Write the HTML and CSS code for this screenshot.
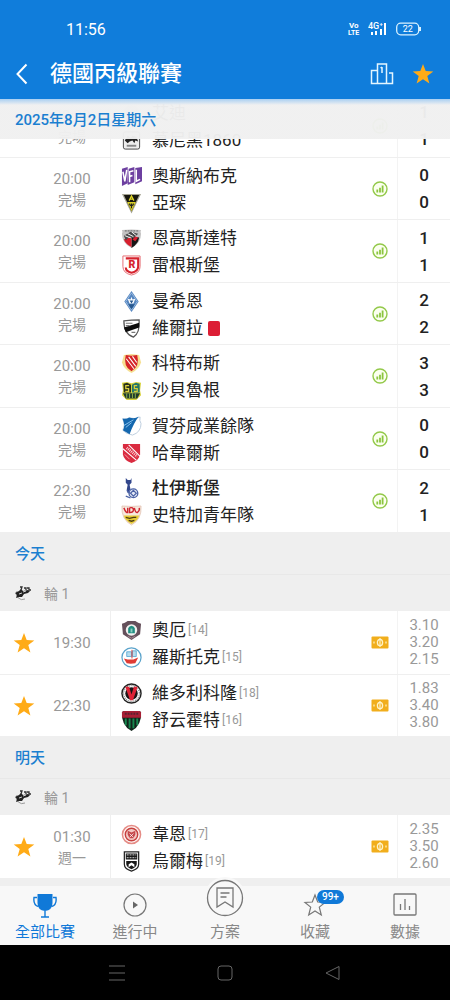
FILE: index.html
```html
<!DOCTYPE html>
<html lang="zh-Hant">
<head>
    <meta charset="UTF-8">
    <meta name="viewport" content="width=device-width, initial-scale=1.0">
    <title>德國丙級聯賽</title>
    <link rel="stylesheet" href="styles.css">
</head>
<body>
    <!-- shared icons -->
    <svg class="sprite" aria-hidden="true">
        <symbol id="star" viewBox="0 0 22 22"><path d="M11 1l2.700 7.100 7.600.3-6 4.700 2.100 7.400L11 16.200l-6.400 4.300 2.100-7.400-6-4.700 7.600-.3z"/></symbol>
        <symbol id="stats" viewBox="0 0 16 16"><circle cx="8" cy="8" r="7" fill="#fbffef" stroke="#93c94a" stroke-width="1.400"/><path d="M5.300 11.400V8.600M8 11.400V6.800M10.600 11.400V4.600" stroke="#8bc53f" stroke-width="1.800"/></symbol>
        <symbol id="ticket" viewBox="0 0 18 13"><rect x=".5" y=".5" width="17" height="12" rx="1" fill="#f1ae1c"/><ellipse cx="9" cy="6.500" rx="2.600" ry="3.200" fill="none" stroke="#fff3c8" stroke-width="1.300"/><path d="M9 2v9M3 5.500v2M15 5.500v2" stroke="#fff3c8" stroke-width="1.200"/></symbol>
        <symbol id="liga" viewBox="0 0 18 16"><path d="M3 6a6 6 0 0 0 8 8" fill="none" stroke="#999" stroke-width="1"/><path d="M1 8l4-2 2-2 2 2 5-1 2 1-2 2-4 1-2 3-3 0-3 1 1-3z" fill="#222"/><path d="M6 2l2 0-1 3M10 3h2v2M13 3h2v2h2" fill="none" stroke="#333" stroke-width="1.300"/><path d="M5 9l3-1M9 7l3-1" stroke="#fff" stroke-width=".8"/></symbol>
    </svg>

    <div class="app">
        <header class="header">
            <div class="status-bar">
                <span class="clock">11:56</span>
                <div class="status-icons">
                    <svg width="12" height="14" viewBox="0 0 12 14" fill="#fff"><text x="1" y="6" font-size="8" font-weight="700">Vo</text><text x="0" y="13" font-size="7" font-weight="700">LTE</text></svg>
                    <svg width="20" height="14" viewBox="0 0 20 14" fill="#fff"><text x="0" y="7" font-size="9" font-weight="500">4G⁺</text><path d="M3 10h2v3H3zM7 9h2v4H7zM12 7h2v6h-2zM16 1h2v12h-2z"/></svg>
                    <svg width="26" height="14" viewBox="0 0 26 14"><rect x=".7" y="1.200" width="22" height="11.600" rx="4" fill="none" stroke="#d9f2ff" stroke-width="1.300"/><path d="M24 5v4" stroke="#d9f2ff" stroke-width="2"/><text x="11.700" y="10" text-anchor="middle" font-size="9" fill="#fff">22</text></svg>
                </div>
            </div>
            <div class="title-bar">
                <button type="button" class="icon-btn back" aria-label="返回">
                    <svg width="14" height="22" viewBox="0 0 14 22"><path d="M10.500 1.500L1.500 11l9 9.500" fill="none" stroke="#fff" stroke-width="2"/></svg>
                </button>
                <h1>德國丙級聯賽</h1>
                <button type="button" class="icon-btn" aria-label="積分榜">
                    <svg width="24" height="22" viewBox="0 0 24 22" fill="none" stroke="#e4f6ff" stroke-width="1.500"><path d="M7.500 20.500V1h9v19.500M7.500 7.500H3.300M5 7.500H1.500v13h21V10H19M12 4v6M12 4l-1.500 1"/></svg>
                </button>
                <button type="button" class="icon-btn fav" aria-label="收藏">
                    <svg width="22" height="22"><use href="#star"/></svg>
                </button>
            </div>
        </header>

        <main class="list">
            <h2 class="day sticky">2025年8月2日星期六</h2>
            <ul class="matches first">
                <li class="match">
                    <div class="time"><span>20:00</span><span>完場</span></div>
                    <div class="teams">
                        <div class="team"><svg class="badge" viewBox="0 0 22 22"><circle cx="11" cy="11" r="9" fill="#ddd"/></svg>艾迪</div>
                        <div class="team"><svg class="badge" viewBox="0 0 22 22"><rect x="2.500" y="2" width="17" height="18" rx="2" fill="#eee" stroke="#444"/><path d="M4 11l3-5 3 2 2-2 4 1 2 5-3-1-1 3-2-3-3 1-2 2z" fill="#222"/><path d="M6 16.500h10" stroke="#888" stroke-width="2"/></svg>慕尼黑1860</div>
                    </div>
                    <div class="extra"><svg width="16" height="16"><use href="#stats"/></svg></div>
                    <div class="score"><span>1</span><span>1</span></div>
                </li>
                <li class="match">
                    <div class="time"><span>20:00</span><span>完場</span></div>
                    <div class="teams">
                        <div class="team"><svg class="badge" viewBox="0 0 22 22"><path d="M1 3l6-2v17l-6 3zM8 3l6-2v16l-7 3zM15 2l7-1v15l-7 3z" fill="#6d3fa0"/><path d="M2 6l2 10L6 4M9 17V6l4-1M9 11l3-1M16 4v12l4-2" fill="none" stroke="#fff" stroke-width="1.600"/></svg>奧斯納布克</div>
                        <div class="team"><svg class="badge" viewBox="0 0 22 22"><path d="M1 1h20L11 21.500z" fill="#a7a594"/><path d="M3 2h16l-8 17z" fill="#17170f"/><path d="M6.500 9.500L11 19l4.500-9.500z" fill="#d9cf27"/><path d="M8.500 8L11 3l2.500 5M9.500 6.500h3" fill="none" stroke="#e4d92a" stroke-width="1.300"/><path d="M9 11c0 3 4 3 4 0M11 11v5" fill="none" stroke="#222" stroke-width="1.200"/></svg>亞琛</div>
                    </div>
                    <div class="extra"><svg width="16" height="16"><use href="#stats"/></svg></div>
                    <div class="score"><span>0</span><span>0</span></div>
                </li>
                <li class="match">
                    <div class="time"><span>20:00</span><span>完場</span></div>
                    <div class="teams">
                        <div class="team"><svg class="badge" viewBox="0 0 22 22"><path d="M1 2q10-1 20 0-1 2 0 4 0 10-10 15Q1 16 1 6q1-2 0-4z" fill="#c4c3c3"/><path d="M11 9l8 1q-1 7-8 11z" fill="#161616"/><path d="M3 12q4-3 8-1v9q-6-3-8-8z" fill="#d81f2e"/><path d="M3 8l7-4 8 2-5 5-4-2-4 4z" fill="#4a4a4a"/><path d="M4 8l5 2M7 6l6 3M11 4l5 4" stroke="#fff" stroke-width="1"/><path d="M12 12l3-3 3 1-3 4z" fill="#d81f2e"/><path d="M4 3h14" stroke="#777" stroke-width="1.500" stroke-dasharray="2 1"/></svg>恩高斯達特</div>
                        <div class="team"><svg class="badge" viewBox="0 0 22 22"><path d="M2 1h18v11q0 7-9 9-9-2-9-9z" fill="#fff" stroke="#e56a70"/><path d="M5 3.500h13V12q0 5-7 6.500Q5 17 5 13" fill="none" stroke="#d6232e" stroke-width="2.200"/><text x="11.500" y="14" text-anchor="middle" font-size="11" font-weight="900" fill="#d6232e">R</text></svg>雷根斯堡</div>
                    </div>
                    <div class="extra"><svg width="16" height="16"><use href="#stats"/></svg></div>
                    <div class="score"><span>1</span><span>1</span></div>
                </li>
                <li class="match">
                    <div class="time"><span>20:00</span><span>完場</span></div>
                    <div class="teams">
                        <div class="team"><svg class="badge" viewBox="0 0 22 22"><path d="M11 0l7.500 11L11 22 3.500 11z" fill="#5585bf"/><path d="M11 2l6 9-6 9-6-9z" fill="none" stroke="#a9c8e8" stroke-width=".8"/><path d="M7 8l3 1 1-3 1 3 3-1-2 5h-4z" fill="#fff"/><path d="M9 10h4l-2 3zM7.500 14h7L11 19z" fill="#27588f"/></svg>曼希恩</div>
                        <div class="team"><svg class="badge" viewBox="0 0 22 22"><path d="M3 3q8-1 16-1 1 14-6 18Q3 17 3 3z" fill="#fff" stroke="#555" stroke-width="1.300"/><path d="M3 10L19 5v5L5 15z" fill="#0c0c0c"/><path d="M5 5.500h7M5 8h4M11 15h4" stroke="#777" stroke-width="1.200"/></svg>維爾拉<span class="red-card"></span></div>
                    </div>
                    <div class="extra"><svg width="16" height="16"><use href="#stats"/></svg></div>
                    <div class="score"><span>2</span><span>2</span></div>
                </li>
                <li class="match">
                    <div class="time"><span>20:00</span><span>完場</span></div>
                    <div class="teams">
                        <div class="team"><svg class="badge" viewBox="0 0 22 22"><path d="M3 2l8-1 8 1 2 8q-2 7-10 11Q3 17 1 10z" fill="#f6df91"/><path d="M5 2l6 1 6-1q3 12-6 17Q2 14 5 2z" fill="#d52327"/><path d="M5.500 6l8 10.500M8 4l7.500 10M12 3.500L16.500 10" stroke="#fff" stroke-width="1.100"/></svg>科特布斯</div>
                        <div class="team"><svg class="badge" viewBox="0 0 22 22"><path d="M1 3l5-1 5 1.500L16 2l5 1-1 8 1 5-5 5H6l-5-5 1-5z" fill="#d9d33c"/><path d="M2.500 4l4-1 4 2v8H3z" fill="#26301c"/><path d="M11.500 5l4-2 4 1v9h-8z" fill="#23756a"/><path d="M2 14h18l-3 5.500H5z" fill="#203a2b"/><path d="M8.500 6H5v3h3v3H4.500M17 6h-3v3h3v3h-3.500" fill="none" stroke="#d9cf3d" stroke-width="1.300"/><path d="M6 14v5M9 14v5M12 14v5M15 14v5" stroke="#8ab548"/></svg>沙貝魯根</div>
                    </div>
                    <div class="extra"><svg width="16" height="16"><use href="#stats"/></svg></div>
                    <div class="score"><span>3</span><span>3</span></div>
                </li>
                <li class="match">
                    <div class="time"><span>20:00</span><span>完場</span></div>
                    <div class="teams">
                        <div class="team"><svg class="badge" viewBox="0 0 22 22"><path d="M2 3q4 1 7-1 6 2 11-1-1 4 1 7 0 9-9 12Q4 18 2 15q3-5 0-12z" fill="#fff" stroke="#bccddd"/><path d="M1.500 2.500q4 1 7-1 6 2 10-1Q13 8 9 19l-7-4q3-5-.5-12.500z" fill="#1467ae"/><path d="M3 10l10-6M5 12l6-5" stroke="#8cc4ee"/></svg>賀芬咸業餘隊</div>
                        <div class="team"><svg class="badge" viewBox="0 0 22 22"><path d="M2 1h18v11q-1 6-9 9-8-3-9-9z" fill="#da2b40"/><path d="M2 6l14 12M8 2l12 12" stroke="#fff" stroke-width="1.100"/><path d="M6 5l11 9" stroke="#ffd8dc" stroke-width="3" stroke-dasharray="1 1"/><path d="M4 12l5 5" stroke="#f0a0a8"/></svg>哈韋爾斯</div>
                    </div>
                    <div class="extra"><svg width="16" height="16"><use href="#stats"/></svg></div>
                    <div class="score"><span>0</span><span>0</span></div>
                </li>
                <li class="match">
                    <div class="time"><span>22:30</span><span>完場</span></div>
                    <div class="teams">
                        <div class="team winner"><svg class="badge" viewBox="0 0 22 22"><path d="M5 0l2 2h3l1-2 0 5-2 2 1 5-3 4-1-4 1-5-2-2z" fill="#33478c"/><circle cx="13" cy="16" r="4.600" fill="#e5eaf6" stroke="#4b62a5" stroke-width="1.400"/><path d="M10 16l3-3 3 3-3 3zM5 19l5 2M6 13l3 3" fill="none" stroke="#4b62a5" stroke-width="1.300"/></svg>杜伊斯堡</div>
                        <div class="team"><svg class="badge" viewBox="0 0 22 22"><path d="M1 1q10 1 20 0 1 14-10 20Q0 15 1 1z" fill="#f7e9de" stroke="#d8b09c" stroke-width=".6"/><path d="M3 11h16q-1 5-8 9-7-4-8-9z" fill="#e6cb35"/><path d="M3 3q2 5 4 5V3M9 3v5q4 0 4-3T9 3M14 3q1 5 3 5 3-2 2-5" fill="none" stroke="#cf2530" stroke-width="1.500"/><path d="M5 13l4 1 4-1 3 0M8 16l3 1 3-1" stroke="#4c3d14" stroke-width="1.400" fill="none"/></svg>史特加青年隊</div>
                    </div>
                    <div class="extra"><svg width="16" height="16"><use href="#stats"/></svg></div>
                    <div class="score"><span>2</span><span>1</span></div>
                </li>
            </ul>

            <h2 class="day">今天</h2>
            <div class="round"><svg width="18" height="16"><use href="#liga"/></svg>輪 1</div>
            <ul class="matches">
                <li class="match">
                    <button type="button" class="icon-btn fav" aria-label="收藏"><svg width="22" height="22"><use href="#star"/></svg></button>
                    <div class="time"><span>19:30</span></div>
                    <div class="teams">
                        <div class="team"><svg class="badge" viewBox="0 0 22 22"><path d="M1 4l3-1 3-2h8l3 2 3 1-1 11-9 6-9-6z" fill="#65505b"/><circle cx="11" cy="10.500" r="6" fill="#f1f0ef"/><path d="M7.500 14V9l1-2L11 6l2.500 1 1 2v5z" fill="#218f82"/><path d="M10 9h2v4h-2z" fill="#8cccc2"/><path d="M7 17l4 2 4-2" stroke="#a98a96" fill="none"/></svg>奧厄<span class="rank">[14]</span></div>
                        <div class="team"><svg class="badge" viewBox="0 0 22 22"><circle cx="11" cy="11" r="10" fill="#fff" stroke="#5aa3cb" stroke-width="1.300"/><path d="M3 12l4 1h6l5-2-3 6q-5 1-9 0z" fill="#df3b35"/><path d="M6 5h5v5H6zM12 4h4v6h-4z" fill="#b6dced" stroke="#4a9fd0" stroke-width=".8"/><path d="M11.500 3v9" stroke="#df3b35"/></svg>羅斯托克<span class="rank">[15]</span></div>
                    </div>
                    <div class="extra"><svg width="18" height="13"><use href="#ticket"/></svg></div>
                    <div class="odds"><span>3.10</span><span>3.20</span><span>2.15</span></div>
                </li>
                <li class="match">
                    <button type="button" class="icon-btn fav" aria-label="收藏"><svg width="22" height="22"><use href="#star"/></svg></button>
                    <div class="time"><span>22:30</span></div>
                    <div class="teams">
                        <div class="team"><svg class="badge" viewBox="0 0 22 22"><circle cx="11" cy="11" r="10" fill="#fff" stroke="#222" stroke-width="1.500"/><circle cx="11" cy="11" r="8.300" fill="none" stroke="#777" stroke-width="1.300" stroke-dasharray="1 1"/><circle cx="11" cy="11" r="6.500" fill="#1b1416"/><path d="M4.500 4h4l2.500 8 2.500-8h4l-5 14h-3z" fill="#df2437"/></svg>維多利科隆<span class="rank">[18]</span></div>
                        <div class="team"><svg class="badge" viewBox="0 0 22 22"><path d="M1 2l2-1h16l2 1q1 14-10 20Q0 16 1 2z" fill="#12241b"/><path d="M1 2l2-1h16l2 1v6H1z" fill="#a81f35"/><path d="M5 9v7M9 9v10M13 9v10M17 9v7" stroke="#16864d" stroke-width="2"/><path d="M4 4h14" stroke="#5b2230" stroke-width="2" stroke-dasharray="2 1"/></svg>舒云霍特<span class="rank">[16]</span></div>
                    </div>
                    <div class="extra"><svg width="18" height="13"><use href="#ticket"/></svg></div>
                    <div class="odds"><span>1.83</span><span>3.40</span><span>3.80</span></div>
                </li>
            </ul>

            <h2 class="day">明天</h2>
            <div class="round"><svg width="18" height="16"><use href="#liga"/></svg>輪 1</div>
            <ul class="matches">
                <li class="match">
                    <button type="button" class="icon-btn fav" aria-label="收藏"><svg width="22" height="22"><use href="#star"/></svg></button>
                    <div class="time"><span>01:30</span><span>週一</span></div>
                    <div class="teams">
                        <div class="team"><svg class="badge" viewBox="0 0 22 22"><circle cx="11" cy="11" r="9.500" fill="#fff7f5" stroke="#e58c86" stroke-width="1.600"/><circle cx="11" cy="11" r="6.500" fill="#f3c9c4" stroke="#c6403f" stroke-width="1.500"/><path d="M7 7l4 2 4-2v4l-2 4H9l-2-4z" fill="#c4474a"/><path d="M9 10l4 4M13 10l-4 4" stroke="#fff" stroke-width=".8"/></svg>韋恩<span class="rank">[17]</span></div>
                        <div class="team"><svg class="badge" viewBox="0 0 22 22"><path d="M3.500 1h15v13q0 5-7.500 7-7.500-2-7.500-7z" fill="#fff" stroke="#222" stroke-width="1.300"/><path d="M5 2.500h12V9H5zM5.500 10.500h11V14q-1 4-5.500 5-4.500-1-5.500-5z" fill="#191919"/><path d="M6 4h10M6 7h10" stroke="#aaa" stroke-width="1.200" stroke-dasharray="2 1"/><path d="M8 17v-3l3-2 3 2v3l-3-2z" fill="#fff"/></svg>烏爾梅<span class="rank">[19]</span></div>
                    </div>
                    <div class="extra"><svg width="18" height="13"><use href="#ticket"/></svg></div>
                    <div class="odds"><span>2.35</span><span>3.50</span><span>2.60</span></div>
                </li>
            </ul>
        </main>

        <nav class="tabs">
            <a href="#all" class="tab active">
                <svg width="24" height="26" viewBox="0 0 24 26"><path d="M4.500 1h15v9q0 7-7.500 8-7.500-1-7.500-8z" fill="#1079d8"/><path d="M4 4.500H1Q0 12 5.500 13.500M20 4.500h3q1 7.500-4.500 9M12 18v6M8 24h8" fill="none" stroke="#1079d8" stroke-width="1.400"/></svg>
                <span>全部比賽</span>
            </a>
            <a href="#live" class="tab">
                <svg width="24" height="26" viewBox="0 0 24 26"><circle cx="12" cy="12" r="11" fill="none" stroke="#777" stroke-width="1.200"/><path d="M10 8.500l5 3.500-5 3.500z" fill="#666"/></svg>
                <span>進行中</span>
            </a>
            <a href="#plans" class="tab main-tab">
                <svg width="42" height="42" viewBox="0 0 42 42"><circle cx="21" cy="21" r="21" fill="#f8f8f8"/><circle cx="21" cy="21" r="17.500" fill="none" stroke="#777" stroke-width="1.300"/><path d="M13 11h16v19l-8-5-8 5zM16.500 16h9M16.500 20h6" fill="none" stroke="#777" stroke-width="1.300"/></svg>
                <span>方案</span>
            </a>
            <a href="#favourites" class="tab">
                <svg width="24" height="26" viewBox="0 0 24 26"><path d="M12 2l2.700 7 7.300.4-5.700 4.700 2 7.900L12 18l-6.300 4 2-7.900L2 9.400 9.300 9z" fill="none" stroke="#777" stroke-width="1.200"/></svg>
                <span>收藏</span>
                <b class="count">99+</b>
            </a>
            <a href="#data" class="tab">
                <svg width="24" height="26" viewBox="0 0 24 26" fill="none" stroke="#777" stroke-width="1.300"><rect x="1" y="1" width="22" height="21" rx="1"/><path d="M7.500 11v6M12 6v11M16.500 13v4"/></svg>
                <span>數據</span>
            </a>
        </nav>

        <div class="system-nav">
            <button type="button" class="icon-btn" aria-label="選單"><svg width="18" height="18" viewBox="0 0 18 18"><path d="M1 2h16M1 9h16M1 16h16"/></svg></button>
            <button type="button" class="icon-btn" aria-label="主畫面"><svg width="18" height="18" viewBox="0 0 18 18"><rect x="2" y="2" width="14" height="14" rx="3"/></svg></button>
            <button type="button" class="icon-btn" aria-label="返回"><svg width="18" height="18" viewBox="0 0 18 18"><path d="M15 2.500v13L2 9z" stroke-linejoin="round"/></svg></button>
        </div>
    </div>
</body>
</html>
```

FILE: styles.css
```css
* { box-sizing: border-box; }
body { margin: 0; font-family: Roboto, "Noto Sans CJK TC", sans-serif; background: #efefef; color: #222; }
h1, h2, ul { margin: 0; padding: 0; }
ul { list-style: none; }
a { text-decoration: none; }
svg { display: block; flex: none; }
.sprite { position: absolute; width: 0; height: 0; }
.icon-btn { display: flex; align-items: center; justify-content: center; padding: 0; border: none; background: none; cursor: pointer; }
.fav { fill: #ffab17; }

.app { display: flex; flex-direction: column; height: 100vh; }

/* header */
.header { flex: none; background: #107ddb; color: #fff; }
.status-bar { display: flex; align-items: center; justify-content: space-between; height: 48px; padding: 10px 28px 0 66px; }
.clock { font-size: 16px; }
.status-icons { display: flex; align-items: center; gap: 8px; }
.title-bar { display: flex; align-items: center; height: 51px; padding: 0 16px; }
.title-bar h1 { flex: 1; font-size: 22px; font-weight: 500; line-height: 30px; }
.title-bar .fav { margin-left: 18px; }
.back { width: 34px; justify-content: flex-start; }

/* match list */
.list { position: relative; flex: 1; min-height: 0; overflow: hidden; background: #efefef; }
.day { display: flex; align-items: center; height: 42px; padding: 0 15px 2px; font-size: 15px; font-weight: 500; color: #1b7fd0; }
.sticky { position: sticky; top: 0; z-index: 1; height: 40px; background: linear-gradient(#a9cff2, rgba(240, 240, 240, 0.97) 6px); }
.round { display: flex; align-items: center; gap: 12px; height: 37px; padding: 0 14px; border-top: 1px solid #e8e8e8; font-size: 14px; color: #999; }
.first { margin-top: -45px; }
.match { display: grid; grid-template-columns: 48px 62px minmax(0, 1fr) 34px 53px; height: 63px; background: #fff; }
.match:nth-child(even) { height: 62px; }
.match + .match { border-top: 1px solid #efefef; }
.time { grid-column: 2; display: flex; flex-direction: column; align-items: center; justify-content: center; padding: 2px 14px 0 0; font-size: 15px; line-height: 21px; color: #999; }
.time span + span { font-size: 14px; }
.teams { display: flex; flex-direction: column; justify-content: center; padding: 2px 0 0 10px; border-left: 1px solid #efefef; }
.team { display: flex; align-items: center; height: 27px; font-size: 17px; line-height: 27px; white-space: nowrap; }
.badge { width: 21px; height: 21px; margin-right: 10px; }
.winner { font-weight: 500; }
.rank { margin-left: 2px; font-size: 12px; color: #999; }
.red-card { width: 12px; height: 15px; margin-left: 5px; border-radius: 2px; background: #dc1e35; }
.extra { display: flex; align-items: center; justify-content: center; }
.score, .odds { display: flex; flex-direction: column; align-items: center; justify-content: center; border-left: 1px solid #f3f3f3; }
.score { padding-top: 1px; font-size: 17px; font-weight: 500; line-height: 27px; }
.odds { font-size: 15px; line-height: 17px; color: #999; }

/* bottom tabs */
.tabs { display: flex; flex: none; height: 59px; background: #f8f8f8; z-index: 2; }
.tab { position: relative; flex: 1; display: flex; flex-direction: column; align-items: center; justify-content: flex-end; padding-bottom: 2px; font-size: 15px; line-height: 22px; color: #888; }
.tab svg { margin-bottom: 2px; }
.tab.active { color: #1079d8; }
.count { position: absolute; top: 4px; left: 50%; margin-left: 2px; padding: 0 5px; border-radius: 8px; background: #1079d8; color: #fff; font-size: 10px; font-weight: 500; line-height: 14px; }

.system-nav { display: flex; flex: none; align-items: center; justify-content: center; gap: 90px; height: 55px; background: #000; fill: none; stroke: #666; }
```
